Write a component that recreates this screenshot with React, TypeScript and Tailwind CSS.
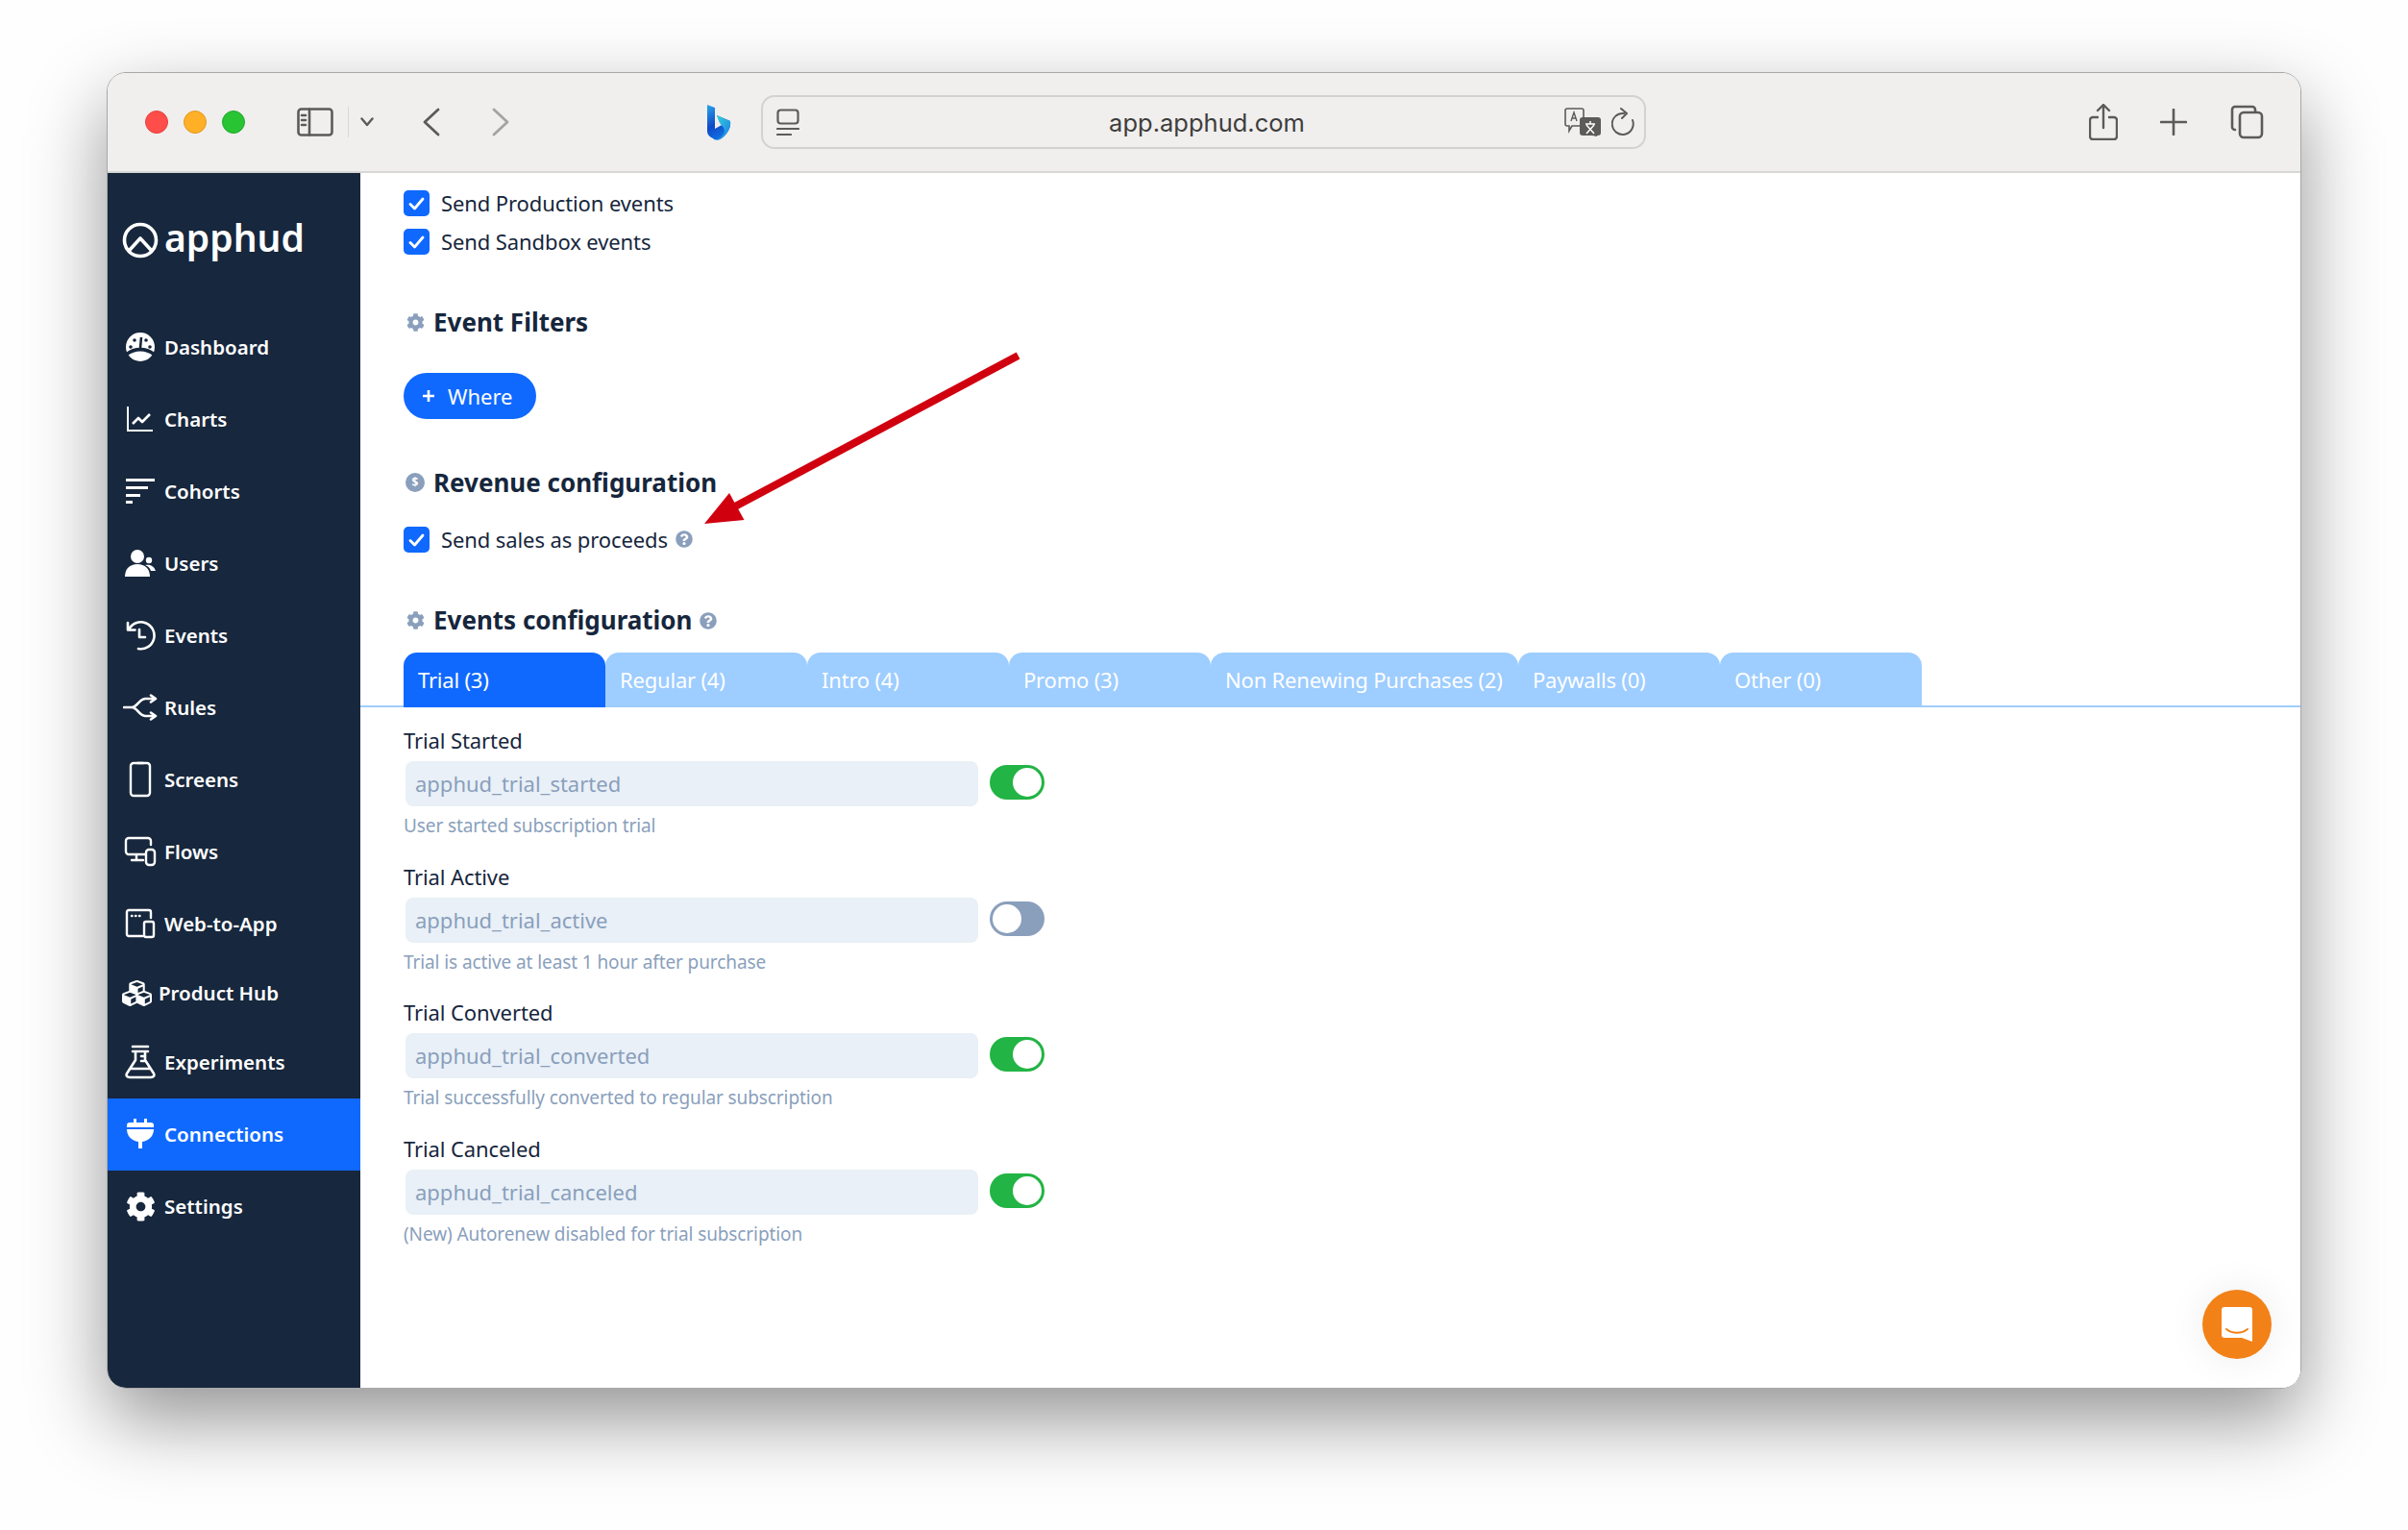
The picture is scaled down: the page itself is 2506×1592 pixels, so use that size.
// App.tsx
import React from 'react';
import { FaCog, FaCubes, FaQuestionCircle } from 'react-icons/fa';

const FONT = "font-['Noto_Sans',sans-serif]";

const iconProps = {
  fill: 'none',
  stroke: 'currentColor',
  strokeLinecap: 'round' as const,
  strokeLinejoin: 'round' as const,
};

const GaugeIcon = () => (
  <svg width="32" height="30" viewBox="0 0 32 30">
    <circle cx="16" cy="15" r="15" fill="white" />
    <path d="M3 24c7-6 19-6 26 0l2-3c-8-7-22-7-30 0z" fill="#17273d" />
    <circle cx="6" cy="15" r="1.8" fill="#17273d" />
    <circle cx="10" cy="8" r="1.8" fill="#17273d" />
    <circle cx="22" cy="8" r="1.8" fill="#17273d" />
    <circle cx="26" cy="15" r="1.8" fill="#17273d" />
    <path d="M16 16l1-11" stroke="#17273d" strokeWidth="2.6" />
  </svg>
);

const ChartIcon = () => (
  <svg width="28" height="28" viewBox="0 0 28 28" fill="none" stroke="currentColor">
    <path d="M1 1v25h26" strokeWidth="2" />
    <path d="M6 19l6-6 4 4 8-8" strokeWidth="2.6" strokeLinejoin="round" />
  </svg>
);

const CohortIcon = () => (
  <svg width="32" height="28" viewBox="0 0 32 28" fill="currentColor">
    <rect x="1" y="1" width="30" height="3" />
    <rect x="1" y="9" width="23" height="3" />
    <rect x="1" y="17" width="15" height="3" />
    <rect x="1" y="24" width="7" height="3" />
  </svg>
);

const UsersIcon = () => (
  <svg width="32" height="28" viewBox="0 0 32 28" fill="white">
    <circle cx="13" cy="7" r="7" />
    <path d="M0 28c0-8 5-13 13-13s13 5 13 13z" />
    <circle cx="25" cy="11" r="3.2" />
    <path d="M21 16c4-1 9 0 11 6h-5c-1-3-3-5-6-6z" />
  </svg>
);

const HistoryIcon = () => (
  <svg width="32" height="32" viewBox="0 0 32 32" {...iconProps} strokeWidth="2.6">
    <path d="M4 10a14 14 0 1 1 10 20M3 3v7.5h7.5M15 10v8h6" />
  </svg>
);

const RulesIcon = () => (
  <svg className="shrink-0" width="36" height="28" viewBox="0 0 36 28" {...iconProps} strokeWidth="2.6">
    <path d="M1 14h8c6 0 7-8 14-9h10M9 14c6 0 7 8 14 9h10M29 1.5l5 3.5-5 3.5M29 19.5l5 3.5-5 3.5" />
  </svg>
);

const PhoneIcon = () => (
  <svg width="24" height="38" viewBox="0 0 24 38" {...iconProps} strokeWidth="2.4">
    <rect x="2" y="2" width="20" height="34" rx="3" />
    <path d="M9 2h6" />
  </svg>
);

const FlowsIcon = () => (
  <svg className="shrink-0" width="34" height="32" viewBox="0 0 34 32" {...iconProps} strokeWidth="2.4">
    <path d="M22 19H5a3 3 0 0 1-3-3V5a3 3 0 0 1 3-3h20a3 3 0 0 1 3 3v4M13 19v6M8 25h12" />
    <rect x="23" y="14" width="9" height="16" rx="3" />
  </svg>
);

const WebIcon = () => (
  <svg width="32" height="32" viewBox="0 0 32 32" {...iconProps} strokeWidth="2.4">
    <path d="M18 29H4a2 2 0 0 1-2-2V4a2 2 0 0 1 2-2h21a2 2 0 0 1 2 2v6" />
    <path d="M7 8h.5M11 8h.5M15 8h.5" />
    <rect x="20" y="14" width="10" height="16" rx="2" />
  </svg>
);

const FlaskIcon = () => (
  <svg width="32" height="36" viewBox="0 0 32 36" {...iconProps} strokeWidth="2.6">
    <path d="M8 2h16M8 7h16M11 7v9L2 30c-1 2 0 4 3 4h22c3 0 4-2 3-4l-9-14V7M6 25h20M17 12h4M17 17h3" />
  </svg>
);

const PlugIcon = () => (
  <svg width="28" height="32" viewBox="0 0 28 32" fill="currentColor">
    <rect x="7" y="0" width="3" height="6" />
    <rect x="18" y="0" width="3" height="6" />
    <path d="M3 4h22a3 3 0 0 1 3 3v2H0V7a3 3 0 0 1 3-3z" />
    <path d="M0 11h28c0 7-5 12-12 13v7h-4v-7C5 23 0 18 0 11z" />
  </svg>
);

interface NavItem {
  label: string;
  icon: React.ReactNode;
  active?: boolean;
  short?: boolean;
}

const navItems: NavItem[] = [
  { label: 'Dashboard', icon: <GaugeIcon /> },
  { label: 'Charts', icon: <ChartIcon /> },
  { label: 'Cohorts', icon: <CohortIcon /> },
  { label: 'Users', icon: <UsersIcon /> },
  { label: 'Events', icon: <HistoryIcon /> },
  { label: 'Rules', icon: <RulesIcon /> },
  { label: 'Screens', icon: <PhoneIcon /> },
  { label: 'Flows', icon: <FlowsIcon /> },
  { label: 'Web-to-App', icon: <WebIcon /> },
  { label: 'Product Hub', icon: <FaCubes size={31} />, short: true },
  { label: 'Experiments', icon: <FlaskIcon /> },
  { label: 'Connections', icon: <PlugIcon />, active: true },
  { label: 'Settings', icon: <FaCog size={31} /> },
];

const Sidebar = () => (
  <aside className="w-[263px] shrink-0 bg-[#17273d] text-white">
    <div className="flex h-[143.5px] items-start gap-[6px] pl-[15px] pt-[51px]">
      <svg width="38" height="38" viewBox="0 0 38 38" fill="none" stroke="white" strokeWidth="3.6" strokeLinecap="round" strokeLinejoin="round" className="shrink-0">
        <circle cx="19" cy="19" r="16.5" />
        <path d="M8 29l11-12 11 12" />
      </svg>
      <span className="-mt-[9px] text-[39px] leading-[50px] font-semibold">apphud</span>
    </div>
    <nav>
      {navItems.map((item) =>
        item.short ? (
          <div key={item.label} className="flex h-[69px] items-center gap-[7px] pl-[14px] text-[20.5px] font-semibold">
            <span className="flex w-[32px] justify-center">{item.icon}</span>
            <span>{item.label}</span>
          </div>
        ) : (
          <div key={item.label} className={`flex h-[75px] items-center pl-[18px] text-[20.5px] font-semibold ${item.active ? 'bg-[#0f69ff]' : ''}`}>
            <span className="flex w-[32px] justify-center">{item.icon}</span>
            <span className="ml-[9px]">{item.label}</span>
          </div>
        ),
      )}
    </nav>
  </aside>
);

const Toolbar = () => (
  <header className="flex h-[104px] shrink-0 items-center border-b-2 border-[#d8d8d6] bg-[#f0efee] text-[#5c5b59]">
    <div className="ml-[39px] flex gap-[16px]">
      <span className="h-[24px] w-[24px] rounded-full border border-[#e5403c] bg-[#ff4d4a]" />
      <span className="h-[24px] w-[24px] rounded-full border border-[#e09a1e] bg-[#ffb026]" />
      <span className="h-[24px] w-[24px] rounded-full border border-[#22a82c] bg-[#28c433]" />
    </div>
    <svg className="ml-[54px]" width="38" height="30" viewBox="0 0 38 30" {...iconProps} strokeWidth="2.6">
      <rect x="1.5" y="1.5" width="35" height="27" rx="3" />
      <path d="M13 1.5v27M5 8h4M5 13h4M5 18h4" />
    </svg>
    <div className="ml-[15px] h-[32px] w-px bg-[#d8d8d6]" />
    <svg className="ml-[12px]" width="14" height="10" viewBox="0 0 14 10" {...iconProps} strokeWidth="2.4">
      <path d="M1.5 1.5L7 8l5.5-6.5" />
    </svg>
    <svg className="ml-[51px]" width="18" height="30" viewBox="0 0 18 30" {...iconProps} strokeWidth="2.8">
      <path d="M16 2L2 15l14 13" />
    </svg>
    <svg className="ml-[54px] text-[#a3a3a1]" width="18" height="30" viewBox="0 0 18 30" {...iconProps} strokeWidth="2.8">
      <path d="M2 2l14 13L2 28" />
    </svg>
    <svg className="ml-[206px]" width="25" height="37" viewBox="0 0 25 37">
      <defs>
        <linearGradient id="bingA" x1="0" y1="0" x2="0.4" y2="1">
          <stop offset="0" stopColor="#2aa7e8" />
          <stop offset="0.6" stopColor="#1048c8" />
          <stop offset="1" stopColor="#0f6fe0" />
        </linearGradient>
        <linearGradient id="bingB" x1="0" y1="0" x2="1" y2="1">
          <stop offset="0" stopColor="#37d1d8" />
          <stop offset="1" stopColor="#1b7ce8" />
        </linearGradient>
      </defs>
      <path d="M0 0l8 3v22l9-5-4-2-3-7 14 6c1 8-4 14-9 18-3 2-7 2-9 0-4-2-6-4-6-8z" fill="url(#bingA)" />
      <path d="M10 11l14 6c1 6-2 12-8 17-3 2-5 3-7 3 6-3 11-8 8-13-1-2-3-3-4-5z" fill="url(#bingB)" />
    </svg>
    <div className="relative ml-[31px] flex h-[56px] w-[921px] items-center rounded-[14px] border-2 border-[#d3d2d0] pl-[14px] pr-[10px]">
      <svg width="24" height="28" viewBox="0 0 24 28" {...iconProps} strokeWidth="2.2">
        <rect x="1.5" y="1.5" width="21" height="14" rx="3" />
        <path d="M1 21h22M1 27h14" />
      </svg>
      <span className="flex-1 pl-[52px] pt-[2px] text-center text-[25.5px] text-[#3d3d3c] font-['Inter',sans-serif]">app.apphud.com</span>
      <svg width="38" height="30" viewBox="0 0 38 30" fill="none">
        <path d="M3 1h15a2 2 0 0 1 2 2v14a2 2 0 0 1-2 2H8l-3 5v-5H3a2 2 0 0 1-2-2V3a2 2 0 0 1 2-2z" stroke="currentColor" strokeWidth="1.6" />
        <path d="M7 14l3-9 3 9M8 11h4" stroke="currentColor" strokeWidth="1.4" />
        <path d="M19 10h16a3 3 0 0 1 3 3v13a3 3 0 0 1-3 3h-1v1l-5-1H19a3 3 0 0 1-3-3V13a3 3 0 0 1 3-3z" fill="currentColor" />
        <path d="M22 17h10M27 14v3M23 27l8-9M31 27l-8-9" stroke="white" strokeWidth="1.5" />
      </svg>
      <svg className="ml-[11px]" width="24" height="30" viewBox="0 0 24 30" {...iconProps} strokeWidth="2">
        <path d="M13 6a11 11 0 1 0 9 7M10 1l6 5-5 5" />
      </svg>
    </div>
    <svg className="ml-[461px]" width="30" height="38" viewBox="0 0 30 38" {...iconProps} strokeWidth="2.4">
      <path d="M9 14H4a3 3 0 0 0-3 3v17a3 3 0 0 0 3 3h22a3 3 0 0 0 3-3V17a3 3 0 0 0-3-3h-5M15 25V2M9 7l6-6 6 6" />
    </svg>
    <svg className="ml-[44px]" width="28" height="28" viewBox="0 0 28 28" {...iconProps} strokeWidth="2.6">
      <path d="M14 1v26M1 14h26" />
    </svg>
    <svg className="ml-[45px]" width="35" height="36" viewBox="0 0 35 36" {...iconProps} strokeWidth="2.6">
      <path d="M5 26a3 3 0 0 1-3-3V5a3 3 0 0 1 3-3h18a3 3 0 0 1 3 3v2" />
      <rect x="10" y="8" width="23" height="26" rx="4" />
    </svg>
  </header>
);

const Checkbox = ({ label }: { label: string }) => (
  <div className="flex h-[27px] items-center">
    <span className="flex h-[27px] w-[27px] items-center justify-center rounded-[5px] bg-[#0f69ff]">
      <svg width="17" height="14" viewBox="0 0 17 14" fill="none" stroke="white" strokeWidth="2.8" strokeLinecap="round" strokeLinejoin="round">
        <path d="M2 7.5L6.5 12 15 2" />
      </svg>
    </span>
    <span className="ml-[12px] text-[22px] tracking-[-0.1px] text-[#16263c]">{label}</span>
  </div>
);

const Heading = ({ icon, children }: { icon: React.ReactNode; children: React.ReactNode }) => (
  <div className="flex h-[32px] items-center">
    <span className="ml-[2px] flex w-[20px] justify-center text-[#8a9fbc]">{icon}</span>
    <h2 className="ml-[9px] text-[26px] font-bold text-[#16263c]">{children}</h2>
  </div>
);

const tabs = [
  { label: 'Trial (3)', width: 'w-[210px]', active: true },
  { label: 'Regular (4)', width: 'w-[210px]' },
  { label: 'Intro (4)', width: 'w-[210px]' },
  { label: 'Promo (3)', width: 'w-[210px]' },
  { label: 'Non Renewing Purchases (2)', width: 'w-[320px]' },
  { label: 'Paywalls (0)', width: 'w-[210px]' },
  { label: 'Other (0)', width: 'w-[210px]' },
];

const fields = [
  { title: 'Trial Started', value: 'apphud_trial_started', help: 'User started subscription trial', on: true },
  { title: 'Trial Active', value: 'apphud_trial_active', help: 'Trial is active at least 1 hour after purchase', on: false },
  { title: 'Trial Converted', value: 'apphud_trial_converted', help: 'Trial successfully converted to regular subscription', on: true },
  { title: 'Trial Canceled', value: 'apphud_trial_canceled', help: '(New) Autorenew disabled for trial subscription', on: true },
];

const Toggle = ({ on }: { on: boolean }) => (
  <span className={`mt-[4px] ml-[12px] flex h-[36px] w-[57px] items-center rounded-full px-[3px] ${on ? 'justify-end bg-[#22b444]' : 'justify-start bg-[#8a9fbc]'}`}>
    <span className="h-[30px] w-[30px] rounded-full bg-white" />
  </span>
);

const Field = ({ title, value, help, on }: (typeof fields)[number]) => (
  <div className="h-[114px]">
    <div className="h-[28px] text-[22px] leading-[28px] tracking-[-0.1px] text-[#16263c]">{title}</div>
    <div className="mt-[8px] flex items-start">
      <div className="ml-[2px] flex h-[47px] w-[596px] items-center rounded-[8px] bg-[#e9f0f7] pl-[10px] text-[22px] text-[#8a9fbc]">{value}</div>
      <Toggle on={on} />
    </div>
    <div className="mt-[8px] h-[24px] text-[19px] leading-[24px] tracking-[-0.1px] text-[#8a9fbc]">{help}</div>
  </div>
);

// overlay annotation, coordinates inside the svg box
const RedArrow = () => (
  <svg className="pointer-events-none absolute left-[600px] top-[180px]" width="360" height="200" viewBox="0 0 360 200">
    <path d="M347.6 10L53 167" stroke="#d0000f" strokeWidth="8" fill="none" />
    <polygon points="21,185 47,153 62.5,181" fill="#d0000f" />
  </svg>
);

const App: React.FC = () => {
  return (
    <div className={`relative min-h-[1592px] w-[2506px] overflow-hidden bg-[#fefefe] pl-[111px] pt-[75px] ${FONT}`}>
      <div className="flex h-[1370px] w-[2284px] flex-col overflow-hidden rounded-[20px] border border-[#a8a8a8] shadow-[0_32px_80px_rgba(0,0,0,0.42)]">
        <Toolbar />
        <div className="relative flex min-h-0 flex-1 bg-white">
          <Sidebar />
          <main className="min-w-0 flex-1">
            <div className="pl-[45px] pt-[18px]">
              <div className="flex flex-col gap-[13px]">
                <Checkbox label="Send Production events" />
                <Checkbox label="Send Sandbox events" />
              </div>
              <div className="mt-[54px]">
                <Heading icon={<FaCog size={19} />}>Event Filters</Heading>
              </div>
              <button className="mt-[37px] flex h-[48px] w-[138px] items-center rounded-full bg-[#0f69ff] pl-[19px] text-[22px] text-white">
                <svg width="14" height="14" viewBox="0 0 14 14" stroke="white" strokeWidth="2.6">
                  <path d="M7 1v12M1 7h12" />
                </svg>
                <span className="ml-[13px]">Where</span>
              </button>
              <div className="mt-[50px]">
                <Heading
                  icon={
                    <span className="flex h-[20px] w-[20px] items-center justify-center rounded-full bg-[#8a9fbc] text-[12px] font-bold text-white">$</span>
                  }
                >
                  Revenue configuration
                </Heading>
              </div>
              <div className="mt-[30px] flex items-center">
                <Checkbox label="Send sales as proceeds" />
                <FaQuestionCircle size={18} className="ml-[8px] -mt-[2px] text-[#8a9fbc]" />
              </div>
              <div className="mt-[54px] flex items-center">
                <Heading icon={<FaCog size={19} />}>Events configuration</Heading>
                <FaQuestionCircle size={18} className="ml-[7px] mt-[2px] text-[#8a9fbc]" />
              </div>
            </div>
            <div className="mt-[18px] flex border-b-2 border-[#a0cdff] pl-[45px]">
              {tabs.map((tab) => (
                <div
                  key={tab.label}
                  className={`-mb-[2px] flex h-[57px] items-center rounded-t-[14px] pl-[15px] text-[22px] tracking-[-0.2px] text-white ${tab.width} ${tab.active ? 'bg-[#0f69ff]' : 'bg-[#9ecdff]'}`}
                >
                  {tab.label}
                </div>
              ))}
            </div>
            <div className="flex flex-col gap-[27.5px] pl-[45px] pt-[20px]">
              {fields.map((f) => (
                <Field key={f.title} {...f} />
              ))}
            </div>
          </main>
          <RedArrow />
          <div className="absolute bottom-[30px] right-[30px] flex h-[72px] w-[72px] items-center justify-center rounded-full bg-[#f28118] shadow-[0_0_40px_rgba(0,0,0,0.08)]">
            <svg width="32" height="36" viewBox="0 0 32 36">
              <path d="M3 0h26a3 3 0 0 1 3 3v33l-11-4H3a3 3 0 0 1-3-3V3a3 3 0 0 1 3-3z" fill="white" />
              <path d="M5 23c6 5 16 5 22 0" stroke="#f28118" strokeWidth="2" fill="none" strokeLinecap="round" />
            </svg>
          </div>
        </div>
      </div>
    </div>
  );
};

export default App;
